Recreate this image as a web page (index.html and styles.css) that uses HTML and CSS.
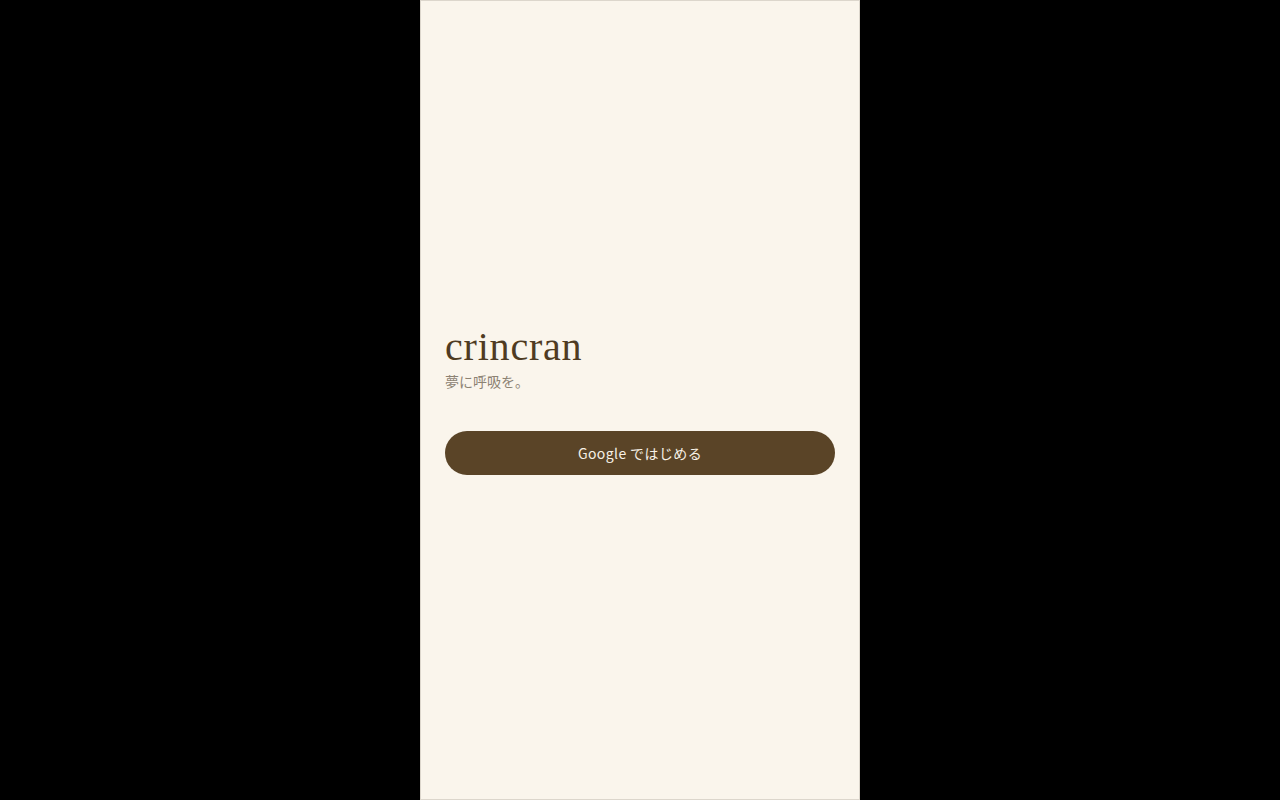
FILE: index.html
```html
<!DOCTYPE html>
<html lang="ja">
<head>
<meta charset="utf-8">
<title>crincran</title>
<link rel="stylesheet" href="styles.css">
</head>
<body>
<main class="app">
  <div class="intro">
    <h1 class="title">crincran</h1>
    <p class="tagline">夢に呼吸を。</p>
  </div>
  <button class="start-btn" type="button">Google ではじめる</button>
</main>
</body>
</html>
```
FILE: styles.css
```css
html, body {
  margin: 0;
  padding: 0;
  height: 100%;
}
body {
  background: #000;
  display: flex;
  justify-content: center;
}
.app {
  box-sizing: border-box;
  width: 440px;
  height: 800px;
  background: #faf5ec;
  border: 1px solid #dcd6cc;
  padding: 0 24px 2px;
  display: flex;
  flex-direction: column;
  justify-content: center;
}
.intro {
  margin-bottom: 40px;
}
.title {
  margin: 0;
  font-family: "Liberation Serif", "Times New Roman", serif;
  font-weight: normal;
  font-size: 40px;
  line-height: 48px;
  letter-spacing: 0.8px;
  color: #4f3b22;
}
.tagline {
  margin: 0;
  font-family: "Noto Sans CJK JP", "Noto Sans", sans-serif;
  font-size: 14px;
  line-height: 20px;
  color: #8c8273;
}
.start-btn {
  width: 100%;
  height: 44px;
  border: none;
  border-radius: 22px;
  background: #5a4427;
  color: #f7f1e6;
  font-family: "Noto Sans CJK JP", "Noto Sans", sans-serif;
  font-size: 14px;
  letter-spacing: 0.4px;
  cursor: pointer;
}
```
